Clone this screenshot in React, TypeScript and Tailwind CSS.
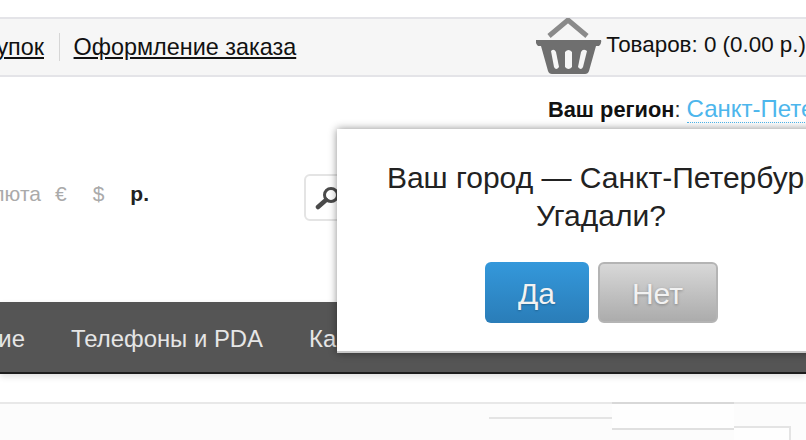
const sans = 'font-["Liberation_Sans",Arial,sans-serif]';

function BasketIcon() {
  return (
    <svg width="66" height="58" viewBox="0 0 66 58" className="shrink-0">
      <path d="M13 18 L32 2 L51 18" fill="none" stroke="#8a8a8a" strokeWidth="5" />
      <path
        d="M0 22 H65 Q66 25 63 28 H60 L53 53 Q52 56 49 56 H16 Q13 56 12 53 L5 28 H2 Q-1 25 0 22 Z"
        fill="#6f6f6f"
      />
      <path d="M15 33 Q18 30 20 34 L23 49 Q20 53 18 49 Z" fill="#f6f6f6" />
      <path d="M29 34 Q32.5 30 36 34 L36 49 Q32.5 53 29 49 Z" fill="#f6f6f6" />
      <path d="M45 34 Q47 30 51 33 L47 49 Q45 53 42 49 Z" fill="#f6f6f6" />
    </svg>
  );
}

function SearchIcon() {
  return (
    <svg width="26" height="26" viewBox="0 0 26 26" className="shrink-0">
      <circle cx="16" cy="10" r="6.5" fill="none" stroke="#4a4a4a" strokeWidth="3" />
      <path d="M11 15 L3 22" stroke="#4a4a4a" strokeWidth="4.5" strokeLinecap="round" />
    </svg>
  );
}

export default function App() {
  return (
    <div className={`relative w-[806px] h-[440px] overflow-hidden bg-white ${sans}`}>
      <div className="h-[17px]" />

      {/* top links bar */}
      <div className="flex h-[60px] border-y-2 border-[#e4e4e8] bg-[#f6f6f6] whitespace-nowrap">
        <div className="flex w-[44px] justify-end items-center shrink-0 pt-[2px]">
          <a className="text-[23.4px] leading-none text-[#111] underline shrink-0">История покупок</a>
        </div>
        <div className="ml-[15px] mr-[14px] my-[14px] w-px bg-[#d6d6d6]" />
        <a className="self-center mt-[2px] text-[23.4px] leading-none text-[#111] underline">Оформление заказа</a>
        <div className="ml-[240px] -mt-px shrink-0">
          <BasketIcon />
        </div>
        <span className="ml-[4px] mt-[15px] text-[22.4px] leading-none text-[#111]">Товаров: 0 (0.00 р.)</span>
      </div>

      {/* logo row */}
      <div className="h-[225px] whitespace-nowrap">
        <div className="pt-[19px] pl-[548px] text-[21.8px] leading-[26px] flex items-baseline">
          <b className="text-[#111] shrink-0">Ваш регион</b>
          <span className="text-[#333] shrink-0">:</span>
          <a className="ml-[6px] shrink-0 text-[24px] text-[#4db6ec] border-b border-dotted border-[#4db6ec]">Санкт-Петербург</a>
        </div>
        <div className="flex mt-[51px]">
          <div className="flex w-[149px] justify-end items-center h-[47px] pb-[7px] text-[21px] text-[#aaa]">
            <span className="shrink-0">Валюта</span>
            <span className="ml-[14px] shrink-0">€</span>
            <span className="ml-[26px] shrink-0">$</span>
            <b className="ml-[26px] shrink-0 text-[#222]">р.</b>
          </div>
          <div className="ml-[155px] flex items-center w-[60px] h-[47px] pl-[9px] rounded-md border-2 border-[#e4e4e4]">
            <SearchIcon />
          </div>
        </div>
      </div>

      {/* main nav */}
      <div className="flex items-center h-[72px] pt-[4px] bg-[#555] border-b-2 border-[#1c1c1c] whitespace-nowrap text-[23.9px] text-[#e6e6e6] shadow-[0_3px_6px_rgba(0,0,0,0.12)]">
        <div className="flex w-[25px] justify-end shrink-0">
          <span className="shrink-0">Сравнение</span>
        </div>
        <span className="ml-[46px]">Телефоны и PDA</span>
        <span className="ml-[46px]">Камеры</span>
      </div>

      {/* content strip */}
      <div className="mt-[28px] border-t-2 border-[#e8e8e8] h-[40px] bg-[#fcfcfc] flex pl-[489px]">
        <div className="mt-[13px] w-[123px] border-t-2 border-[#e4e4e4]" />
        <div className="w-[122px] -mt-[2px] h-[28px] border-t-2 border-b-2 border-t-[#d8d8d8] border-b-[#e0e0e0] bg-[#fefefe]" />
        <div className="mt-[22px] w-[57px] border-t-2 border-r-2 border-[#e4e4e4] bg-[#fefefe]" />
      </div>

      {/* region popup */}
      <div className="absolute left-[337px] top-[129px] w-[528px] h-[224px] bg-white border-b-2 border-[#c8c8c8] shadow-[0_0_8px_rgba(0,0,0,0.45)] flex flex-col items-center">
        <p className="mt-[30px] text-[30px] leading-[38px] text-[#222] text-center whitespace-nowrap">
          Ваш город — Санкт-Петербург
          <br />
          Угадали?
        </p>
        <div className="mt-[27px] flex gap-[9px]">
          <button className="w-[104px] h-[61px] pt-[1px] rounded-md bg-gradient-to-b from-[#3498db] to-[#2a7db8] text-[30px] text-[#f2f2f2] [text-shadow:0_1px_2px_rgba(0,0,0,0.25)]">
            Да
          </button>
          <button className="w-[120px] h-[61px] pt-[1px] rounded-md border-2 border-[#b4b4b4] bg-gradient-to-b from-[#d8d8d8] to-[#acacac] text-[30px] text-[#f2f2f2] [text-shadow:0_1px_3px_rgba(0,0,0,0.3)]">
            Нет
          </button>
        </div>
      </div>
    </div>
  );
}
